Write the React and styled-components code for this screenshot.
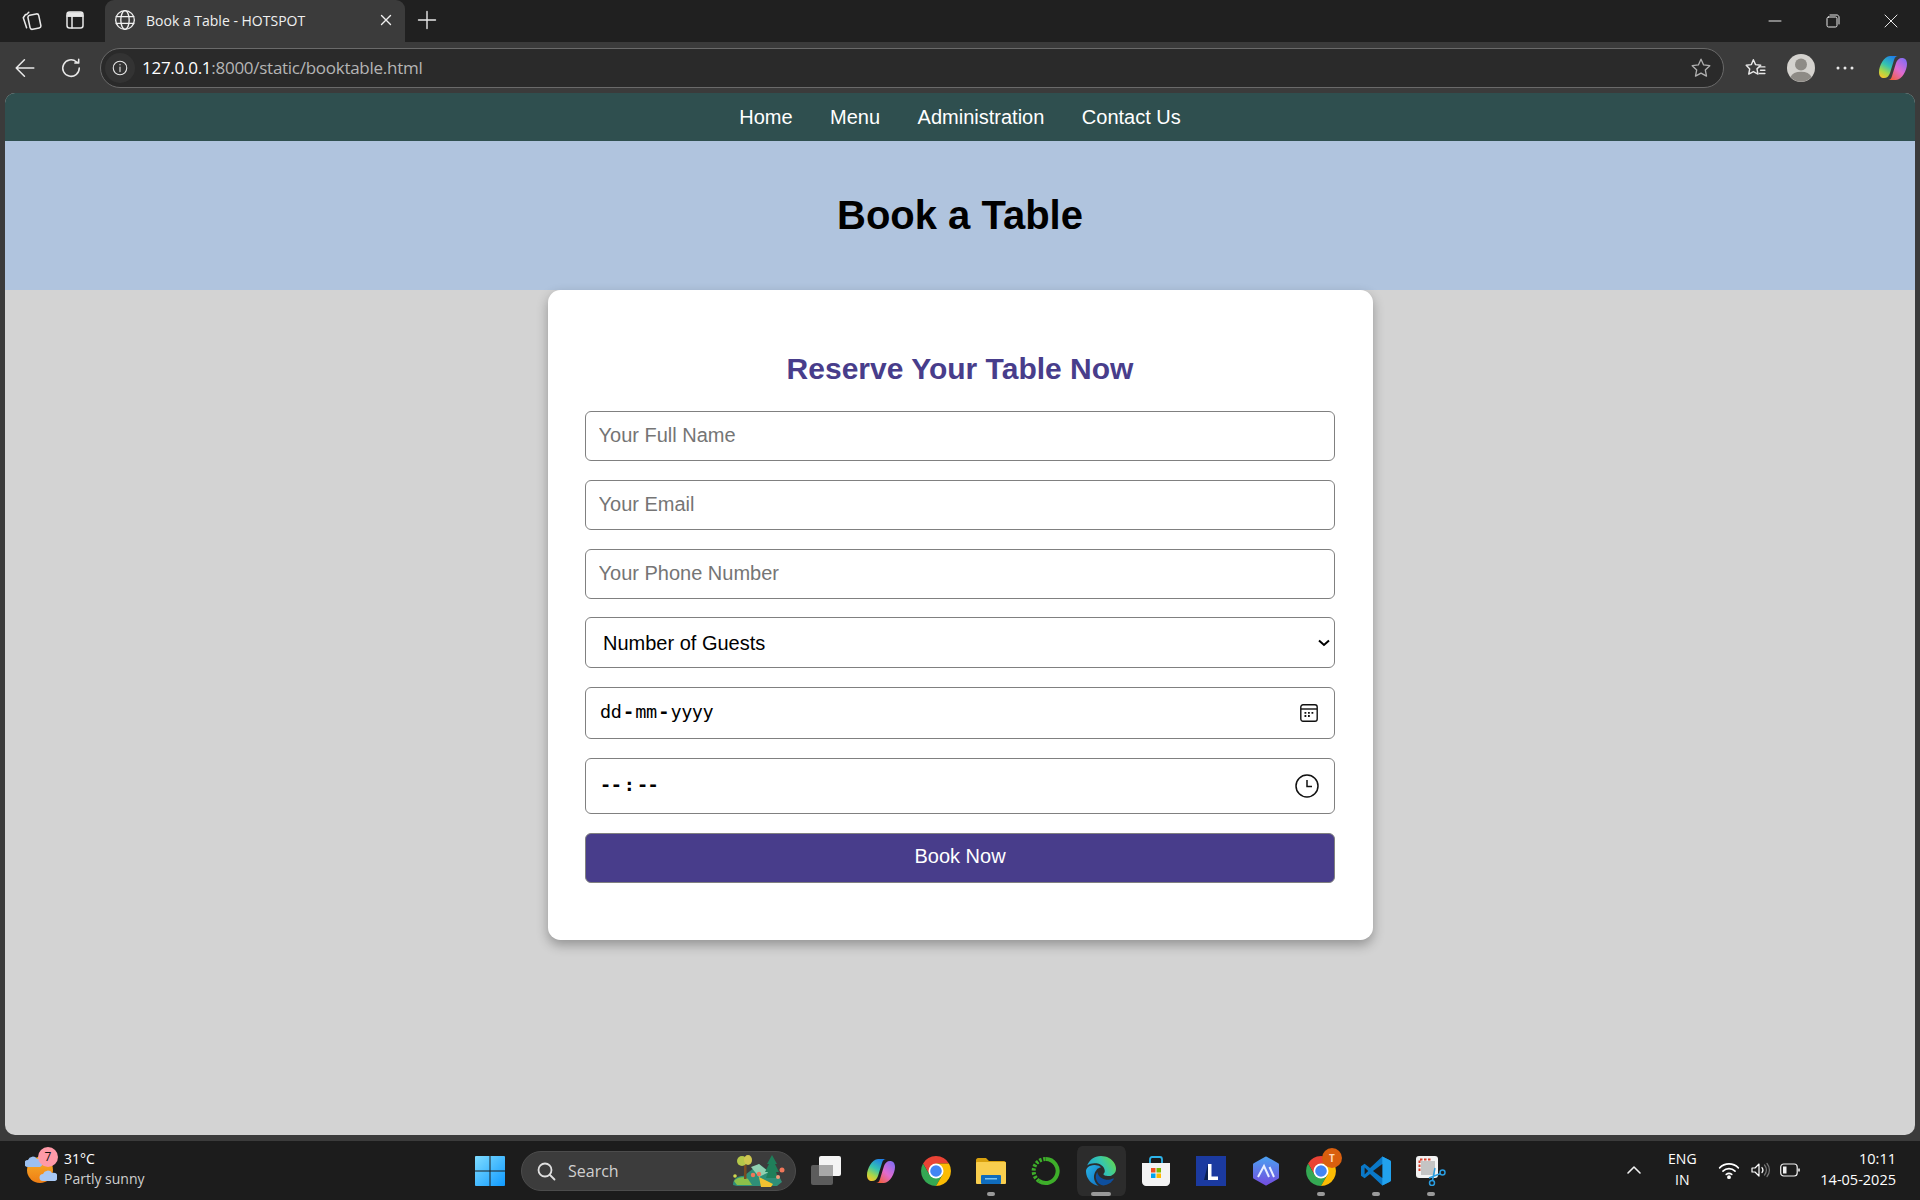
import React from "react";
import styled, { createGlobalStyle } from "styled-components";

const Global = createGlobalStyle`
html, body { margin: 0; padding: 0; background: #3b3b3b; }
* { box-sizing: border-box; }
`;

const chevron = encodeURIComponent(
  '<svg xmlns="http://www.w3.org/2000/svg" width="12" height="8" viewBox="0 0 12 8"><path d="M1 1.500l5 4.500 5-4.500" fill="none" stroke="#000" stroke-width="2"/></svg>'
);

const Screen = styled.div`
  width: 1920px;
  height: 1200px;
  display: flex;
  flex-direction: column;
  overflow: hidden;
  background: #3b3b3b;
  font-family: "Liberation Sans", Arial, sans-serif;
`;

/* browser chrome */
const TitleBar = styled.div`
  height: 42px;
  background: #202020;
  display: flex;
  align-items: flex-start;
  color: #e8e8e8;
`;
const SideIcons = styled.div`
  width: 105px;
  height: 40px;
  display: flex;
  align-items: center;
  gap: 23px;
  padding-left: 20px;
`;
const Tab = styled.div`
  width: 300px;
  height: 42px;
  background: #3b3b3b;
  border-radius: 9px 9px 0 0;
  display: flex;
  align-items: center;
  padding: 0 12px 2px 9px;
  font-family: "Open Sans", sans-serif;
  font-size: 14px;
  color: #f0f0f0;
`;
const TabTitle = styled.span`
  margin-left: 10px;
  flex: 1;
`;
const NewTab = styled.div`
  margin: 10px 0 0 12px;
  height: 20px;
  display: flex;
`;
const WindowButtons = styled.div`
  margin-left: auto;
  height: 42px;
  display: flex;
  align-items: center;
  gap: 44px;
  padding-right: 22px;
`;
const Toolbar = styled.div`
  height: 51px;
  display: flex;
  align-items: center;
  padding-left: 14px;
  color: #e8e8e8;
`;
const ToolGap = styled.div`
  width: 24px;
`;
const AddressBar = styled.div`
  margin-left: 18px;
  width: 1624px;
  height: 40px;
  background: #2a2a2a;
  border: 1.5px solid #6a6a6a;
  border-radius: 20px;
  display: flex;
  align-items: center;
  padding: 0 11px 0 4px;
  font-family: "Open Sans", sans-serif;
  font-size: 17px;
  letter-spacing: -0.27px;
`;
const InfoChip = styled.div`
  width: 30px;
  height: 30px;
  border-radius: 50%;
  background: #333333;
  display: flex;
  align-items: center;
  justify-content: center;
`;
const Host = styled.span`
  margin-left: 7px;
  color: #ffffff;
`;
const UrlRest = styled.span`
  color: #b5b5b5;
`;
const StarSlot = styled.div`
  margin-left: auto;
  display: flex;
`;
const ToolIcons = styled.div`
  display: flex;
  align-items: center;
  margin-left: 20px;
  gap: 21px;
  & > :last-child {
    margin-left: 4px;
  }
`;

/* the page itself */
const PageFrame = styled.div`
  flex: 0 0 1042px;
  margin: 0 5px;
  background: lightgray;
  border-radius: 10px;
  overflow: hidden;
  display: flex;
  flex-direction: column;
  align-items: center;
`;
const Nav = styled.nav`
  width: 100%;
  height: 48px;
  flex: none;
  background: darkslategray;
  display: flex;
  justify-content: center;
  align-items: center;
  gap: 37.5px;
`;
const NavLink = styled.a`
  color: #ffffff;
  font-size: 20px;
  text-decoration: none;
`;
const Hero = styled.header`
  width: 100%;
  height: 149px;
  flex: none;
  background: lightsteelblue;
  display: flex;
  align-items: center;
  justify-content: center;
`;
const Title = styled.h1`
  margin: 0;
  font-size: 40px;
  color: #000000;
`;
const Card = styled.section`
  width: 825px;
  height: 650px;
  flex: none;
  background: #ffffff;
  border-radius: 12.5px;
  box-shadow: 0 5px 12px rgba(0, 0, 0, 0.3);
  padding: 37.5px;
`;
const CardTitle = styled.h2`
  margin: 24.5px 0 24.75px;
  text-align: center;
  color: darkslateblue;
  font-size: 30px;
  line-height: 34.5px;
`;
const Form = styled.form`
  display: flex;
  flex-direction: column;
  gap: 18.7px;
`;
const TextInput = styled.input`
  width: 100%;
  height: 50px;
  border: 1.25px solid #808080;
  border-radius: 6px;
  padding: 0 12.5px 1px;
  font-family: inherit;
  font-size: 20px;
  outline: none;
  &::placeholder {
    color: #757575;
    opacity: 1;
  }
`;
const GuestSelect = styled.select`
  appearance: none;
  width: 100%;
  height: 51px;
  border: 1.25px solid #808080;
  border-radius: 6px;
  padding: 0 24px 0 17px;
  background: #ffffff url("data:image/svg+xml,${chevron}") no-repeat right 4px center;
  font-family: inherit;
  font-size: 20px;
  color: #000000;
  outline: none;
`;
const PickerField = styled.div`
  height: ${(p) => p.$h}px;
  border: 1.25px solid #808080;
  border-radius: 6px;
  display: flex;
  align-items: center;
  justify-content: space-between;
  padding: 0 16px 0 14px;
  color: #000000;
`;
const PickerText = styled.span`
  font-family: "DejaVu Sans Mono", monospace;
  font-size: 18.500px;
  letter-spacing: -0.5px;
  font-weight: ${(p) => (p.$bold ? 700 : 400)};
  margin-bottom: 3px;
`;
const Sep = styled.span`
  margin: 0 ${(p) => p.$m}px;
  font-weight: 700;
`;
const SubmitButton = styled.button`
  height: 50px;
  background: darkslateblue;
  color: #ffffff;
  border: 1.25px solid #808080;
  border-radius: 6px;
  padding: 0 0 2px;
  font-family: inherit;
  font-size: 20px;
`;

/* windows taskbar */
const Taskbar = styled.div`
  margin-top: 6px;
  height: 59px;
  flex: none;
  background: #1c1c1c;
  display: flex;
  align-items: center;
  font-family: "Open Sans", sans-serif;
  color: #ffffff;
`;
const Weather = styled.div`
  width: 475px;
  flex: none;
  display: flex;
  align-items: center;
  padding-left: 25px;
`;
const WeatherIcon = styled.div`
  position: relative;
  width: 32px;
  height: 34px;
  flex: none;
`;
const WeatherBadge = styled.span`
  position: absolute;
  left: 13px;
  top: -6.500px;
  width: 20px;
  height: 20px;
  border-radius: 50%;
  background: #ff9aa8;
  color: #111111;
  font-size: 12px;
  line-height: 20px;
  text-align: center;
`;
const WeatherText = styled.div`
  margin-left: 7px;
  padding-bottom: 3px;
  font-size: 14px;
  line-height: 20.500px;
`;
const WeatherSub = styled.div`
  color: #cfcfcf;
`;
const SearchPill = styled.div`
  margin-left: 16px;
  width: 275px;
  height: 40px;
  flex: none;
  border-radius: 20px;
  background: #3c3c3c;
  border: 1px solid #4c4c4c;
  display: flex;
  align-items: center;
  padding-left: 14px;
  font-size: 16px;
  color: #d0d0d0;
`;
const SearchLabel = styled.span`
  margin-left: 12px;
`;
const SearchArt = styled.div`
  margin-left: auto;
  margin-right: 9px;
  display: flex;
`;
const Apps = styled.div`
  padding-left: 15px;
  display: flex;
  align-items: center;
`;
const AppSlot = styled.div`
  position: relative;
  width: 55px;
  height: 50px;
  margin-left: ${(p) => (p.$first ? "-12.5px" : "0")};
  display: flex;
  align-items: center;
  justify-content: center;
  border-inline: 3px solid transparent;
  border-radius: 8px;
  background: ${(p) => (p.$active ? "#2c2c2c" : "transparent")};
  background-clip: padding-box;
`;
const RunDot = styled.span`
  position: absolute;
  bottom: 0;
  left: 50%;
  transform: translateX(-50%);
  width: ${(p) => (p.$active ? "20px" : "8px")};
  height: 4px;
  border-radius: 2px;
  background: #9a9a9a;
`;
const AppBadge = styled.span`
  position: absolute;
  right: 3.500px;
  top: 2.500px;
  width: 20px;
  height: 20px;
  border-radius: 50%;
  background: #d95f0e;
  color: #ffd9b8;
  font-size: 10px;
  font-weight: 700;
  line-height: 20px;
  text-align: center;
`;
const Tray = styled.div`
  margin-left: auto;
  display: flex;
  align-items: center;
  padding: 0 24px 2px 0;
`;
const Lang = styled.div`
  margin-left: 20px;
  width: 40px;
  font-size: 14px;
  line-height: 20.500px;
  text-align: center;
`;
const TrayIcons = styled.div`
  margin-left: 16px;
  display: flex;
  align-items: center;
  gap: 10px;
`;
const Clock = styled.div`
  margin-left: 20px;
  font-size: 14.500px;
  line-height: 20.500px;
  text-align: right;
`;

/* drawings */
const Line = ({ size = 20, children, sw = 1.4, color = "currentColor", view = 20 }) => (
  <svg width={size} height={size} viewBox={`0 0 ${view} ${view}`} fill="none" stroke={color} strokeWidth={sw} strokeLinecap="round" strokeLinejoin="round">
    {children}
  </svg>
);

const ChromeLogo = () => (
  <svg width="30" height="30" viewBox="2 2 44 44">
    <path d="M24 2A22 22 0 0 1 43 13H24L14.500 29.500 5 13A22 22 0 0 1 24 2z" fill="#ea4335" />
    <path d="M5 13l9.500 16.500h19L24 46A22 22 0 0 1 5 13z" fill="#34a853" />
    <path d="M43 13H24l9.500 16.500L24 46A22 22 0 0 0 43 13z" fill="#fbbc04" />
    <circle cx="24" cy="24" r="11" fill="#ffffff" />
    <circle cx="24" cy="24" r="8.500" fill="#4285f4" />
  </svg>
);

const CopilotLogo = ({ id = "cp", size = 28 }) => (
  <svg width={size} height={size} viewBox="0 0 28 28">
    <defs>
      <linearGradient id={`${id}A`} x1="0.7" y1="0" x2="0.2" y2="1">
        <stop offset="0" stopColor="#1f7fe8" />
        <stop offset="0.45" stopColor="#35c4b0" />
        <stop offset="0.75" stopColor="#a8d848" />
        <stop offset="1" stopColor="#f7c52d" />
      </linearGradient>
      <linearGradient id={`${id}B`} x1="0.9" y1="0.1" x2="0.2" y2="1">
        <stop offset="0" stopColor="#8a6cf0" />
        <stop offset="0.5" stopColor="#e06bd0" />
        <stop offset="1" stopColor="#f2603c" />
      </linearGradient>
    </defs>
    <path d="M11 2h8c-2 0-3 1-4 4l-4 13c-1 3-3 5-6 5-3 0-5-2-5-6C0 12 5 2 11 2z" fill={`url(#${id}A)`} />
    <path d="M17 26H9c2 0 3-1 4-4l4-13c1-3 3-5 6-5 3 0 5 2 5 6 0 6-5 16-11 16z" fill={`url(#${id}B)`} />
  </svg>
);

const EdgeLogo = () => (
  <svg width="30" height="30" viewBox="0 0 24 24">
    <defs>
      <linearGradient id="edTop" x1="0" y1="0.7" x2="1" y2="0.3">
        <stop offset="0" stopColor="#1f9fd8" />
        <stop offset="0.55" stopColor="#35c6b0" />
        <stop offset="1" stopColor="#62d84e" />
      </linearGradient>
      <linearGradient id="edLeft" x1="0" y1="0" x2="1" y2="1">
        <stop offset="0" stopColor="#28b4e4" />
        <stop offset="1" stopColor="#1070c4" />
      </linearGradient>
    </defs>
    <path d="M11.960.06q1.700 0 3.330.39 1.630.38 3.070 1.150 1.430.77 2.620 1.930 1.180 1.160 1.980 2.700.49.94.76 1.960.28 1 .28 2.080 0 .89-.23 1.700-.24.8-.69 1.480-.45.68-1.100 1.220-.64.53-1.450.88-.54.24-1.110.36-.58.13-1.160.13-.42 0-.97-.03-.54-.03-1.100-.12-.55-.1-1.050-.28-.5-.19-.84-.5-.12-.09-.23-.24-.1-.16-.1-.33 0-.15.16-.35.16-.2.35-.5.2-.28.36-.68.16-.4.16-.95 0-1.060-.4-1.960-.4-.91-1.060-1.640-.66-.74-1.520-1.280-.86-.55-1.790-.89-.84-.3-1.720-.44-.87-.14-1.760-.14-1.550 0-3.060.45T.94 7.550q.71-1.740 1.810-3.130Q3.860 3.030 5.200 2.080 6.550 1.130 8.180.6 9.800.06 11.960.06z" fill="url(#edTop)" />
    <path d="M6.360 16.590q0 1.100.27 2.150.27 1.060.78 2.030.51.96 1.240 1.770.74.82 1.660 1.400-1.470-.2-2.800-.74-1.330-.55-2.480-1.370-1.150-.83-2.080-1.900-.92-1.070-1.580-2.330T.36 14.940Q0 13.540 0 12.060q0-.81.32-1.490.31-.68.83-1.230.53-.55 1.200-.96.66-.4 1.350-.66.74-.27 1.500-.39.78-.12 1.550-.12.7 0 1.420.1.720.12 1.400.35.68.23 1.320.57.63.35 1.160.83-.35 0-.7.07-.33.07-.65.23v-.02q-.63.28-1.200.74-.57.46-1.050 1.040-.48.58-.87 1.260-.38.67-.65 1.390-.27.71-.42 1.440-.15.72-.15 1.380z" fill="url(#edLeft)" />
    <path d="M21.860 17.860q.14 0 .25.12.1.13.1.25t-.11.33l-.32.46-.43.53-.44.5q-.21.25-.38.42l-.22.23q-.58.53-1.340 1.040-.76.51-1.600.91-.86.4-1.740.64t-1.670.24q-.9 0-1.690-.28-.8-.28-1.480-.78-.68-.5-1.220-1.170-.53-.66-.92-1.440-.38-.77-.58-1.600-.2-.83-.2-1.670 0-1 .32-1.960.33-.97.87-1.800.14.95.55 1.770.41.82 1.020 1.500.6.68 1.380 1.210.78.54 1.640.9.86.36 1.770.56.92.2 1.800.2 1.120 0 2.180-.24 1.060-.23 2.060-.72l.2-.1.2-.05z" fill="#0d4f9e" />
  </svg>
);

const StoreLogo = () => (
  <svg width="30" height="30" viewBox="0 0 30 30">
    <path d="M9 7V3.500C9 2 10 1 11 1h8c1 0 2 1 2 2.500V7" fill="none" stroke="#2db4ea" strokeWidth="1.800" />
    <path d="M1 7h28v19c0 2-2 4-4 4H5c-2 0-4-2-4-4z" fill="#f3f3f3" />
    <rect x="10" y="12" width="4.500" height="4.500" fill="#f25022" />
    <rect x="15.500" y="12" width="4.500" height="4.500" fill="#7fba00" />
    <rect x="10" y="17.500" width="4.500" height="4.500" fill="#00a4ef" />
    <rect x="15.500" y="17.500" width="4.500" height="4.500" fill="#ffb900" />
  </svg>
);

const VsCodeLogo = () => (
  <svg width="30" height="30" viewBox="0 0 100 100">
    <path d="M71 2 96 14c2 1 4 3 4 6v60c0 3-2 5-4 6L71 98 30 60 12 74 0 66V34l12-8 18 14z" fill="#0a78c8" />
    <path d="M71 2 96 14c2 1 4 3 4 6v60c0 3-2 5-4 6L71 98z" fill="#22a2ee" />
    <path d="M71 27v46L40 50z" fill="#1c1c1c" />
    <path d="M12 38v24l12-12z" fill="#1c1c1c" />
  </svg>
);

const appList = [
  {
    key: "tasks",
    first: true,
    icon: (
      <svg width="30" height="30" viewBox="0 0 30 30">
        <rect x="0" y="9" width="22" height="20" rx="2" fill="#5c5c5c" />
        <rect x="8" y="0" width="22" height="20" rx="2" fill="#f4f4f4" />
        <rect x="8" y="9" width="14" height="11" fill="#a8a8a8" />
      </svg>
    ),
  },
  { key: "copilot", icon: <CopilotLogo id="cpTask" /> },
  { key: "chrome", icon: <ChromeLogo /> },
  {
    key: "files",
    run: true,
    icon: (
      <svg width="30" height="28" viewBox="0 0 30 28">
        <path d="M0 3c0-1 1-2 2-2h8l3 3h15c1 0 2 1 2 2v4H0z" fill="#d9a10e" />
        <rect x="0" y="5" width="30" height="22" rx="1" fill="#f9ce4e" />
        <rect x="5" y="18" width="20" height="9" rx="1" fill="#0f6cbd" />
        <rect x="9" y="21" width="12" height="1.500" fill="#7cc4f2" />
      </svg>
    ),
  },
  {
    key: "ring",
    icon: (
      <svg width="30" height="30" viewBox="0 0 30 30" fill="none">
        <path d="M15 3a12 12 0 1 1-7 22" stroke="#3eae2a" strokeWidth="4" />
        <path d="M8 25A12 12 0 0 1 15 3" stroke="#3eae2a" strokeWidth="4" strokeDasharray="2.500 1.500" />
      </svg>
    ),
  },
  { key: "edge", active: true, icon: <EdgeLogo /> },
  { key: "store", icon: <StoreLogo /> },
  {
    key: "launcher",
    icon: (
      <svg width="30" height="30" viewBox="0 0 30 30">
        <rect width="30" height="30" fill="#1b3aa0" />
        <path d="M8 24 12 8v16z" fill="#0a2050" />
        <path d="M12 8h3.500v12.500H22V24H12z" fill="#ffffff" />
      </svg>
    ),
  },
  {
    key: "hex",
    icon: (
      <svg width="28" height="30" viewBox="0 0 28 30">
        <defs>
          <linearGradient id="hxA" x1="0" y1="0" x2="0" y2="1">
            <stop offset="0" stopColor="#4d9df0" />
            <stop offset="1" stopColor="#7150e0" />
          </linearGradient>
        </defs>
        <path d="M14 2 25.500 8.500v13L14 28 2.500 21.500v-13z" fill="url(#hxA)" stroke="url(#hxA)" strokeWidth="3" strokeLinejoin="round" />
        <path d="M6 21 12 10l5 11M17.500 11l4.500 10" fill="none" stroke="#e8eeff" strokeWidth="2" />
      </svg>
    ),
  },
  { key: "chrome2", run: true, icon: <ChromeLogo />, badge: "T" },
  { key: "vscode", run: true, icon: <VsCodeLogo /> },
  {
    key: "snip",
    run: true,
    icon: (
      <svg width="30" height="30" viewBox="0 0 30 30">
        <rect x="0" y="0" width="22" height="22" rx="3" fill="#f2f2f2" />
        <path d="M5 5h14v14H5z" fill="#c4c4c4" />
        <path d="M3.500 15V3.500H15" fill="none" stroke="#d9402c" strokeWidth="2" strokeDasharray="2.500 1.500" />
        <path d="M26 17 13 22M16 27l3-15" stroke="#2a9de0" strokeWidth="1.500" fill="none" />
        <circle cx="26.500" cy="16.500" r="2.500" fill="#1c1c1c" stroke="#2a9de0" strokeWidth="1.500" />
        <circle cx="16" cy="27" r="2.500" fill="#1c1c1c" stroke="#2a9de0" strokeWidth="1.500" />
      </svg>
    ),
  },
];

export default function App() {
  return (
    <Screen>
      <Global />
      <TitleBar>
        <SideIcons>
          <Line size={22}>
            <rect x="8" y="5" width="10" height="13" rx="2" transform="rotate(-12 13 11)" />
            <path d="M5 5 3 8l3 9M8 3 6 5" />
          </Line>
          <Line size={20} sw={1.5}>
            <rect x="2" y="2" width="16" height="16" rx="2.500" />
            <path d="M2 6h16M7 6v12" />
            <path d="M3 3h14v3H3z" fill="currentColor" />
          </Line>
        </SideIcons>
        <Tab>
          <Line size={22} sw={1.2}>
            <circle cx="10" cy="10" r="8.500" />
            <ellipse cx="10" cy="10" rx="3.800" ry="8.500" />
            <path d="M2 7h16M2 13h16" />
          </Line>
          <TabTitle>Book a Table - HOTSPOT</TabTitle>
          <Line size={14} sw={1.4} view={14}>
            <path d="M2.500 2.500l9 9M11.500 2.500l-9 9" />
          </Line>
        </Tab>
        <NewTab>
          <Line size={20} sw={1.4}>
            <path d="M10 1.500v17M1.500 10h17" />
          </Line>
        </NewTab>
        <WindowButtons>
          <Line size={14} sw={1} view={14}>
            <path d="M1 7h12" />
          </Line>
          <Line size={14} sw={1} view={14}>
            <rect x="1" y="3" width="10" height="10" rx="1.500" />
            <path d="M4 1h7c1 0 2 1 2 2v7" />
          </Line>
          <Line size={14} sw={1} view={14}>
            <path d="M1 1l12 12M13 1 1 13" />
          </Line>
        </WindowButtons>
      </TitleBar>
      <Toolbar>
        <Line size={22} sw={1.4}>
          <path d="M18 10H2M9.500 2.500 2 10l7.500 7.500" />
        </Line>
        <ToolGap />
        <Line size={22} sw={1.4}>
          <path d="M17 5.500V2M17 5.500h-3.500M17.500 10A7.500 7.500 0 1 1 15 4.500L17 5.500" />
        </Line>
        <AddressBar>
          <InfoChip>
            <Line size={18} sw={1.2}>
              <circle cx="10" cy="10" r="7.500" />
              <path d="M10 9v5M10 6v.5" />
            </Line>
          </InfoChip>
          <Host>127.0.0.1</Host>
          <UrlRest>:8000/static/booktable.html</UrlRest>
          <StarSlot>
            <Line size={22} sw={1.2} color="#b0b0b0">
              <path d="M10 2l2.400 5.200 5.600.7-4.100 3.900 1.100 5.600L10 14.600l-5 2.800 1.100-5.600L2 7.900l5.600-.7z" />
            </Line>
          </StarSlot>
        </AddressBar>
        <ToolIcons>
          <Line size={22} sw={1.3}>
            <path d="M8.500 2.500l2 4.400 4.700.6-3.400 3.300.9 4.700-4.200-2.300-4.200 2.300.9-4.700L2 7.500l4.700-.6z" />
            <path d="M14 9h5M15 12h4M14 15h5" />
          </Line>
          <svg width="28" height="28" viewBox="0 0 28 28">
            <circle cx="14" cy="14" r="14" fill="#d4d2ce" />
            <circle cx="14" cy="10.500" r="6" fill="#8e8b86" />
            <path d="M3.500 23a11 7.500 0 0 1 21 0 14 14 0 0 1-21 0z" fill="#8e8b86" />
          </svg>
          <svg width="18" height="6" viewBox="0 0 18 6" fill="#e8e8e8">
            <circle cx="2" cy="3" r="1.500" />
            <circle cx="9" cy="3" r="1.500" />
            <circle cx="16" cy="3" r="1.500" />
          </svg>
          <CopilotLogo id="cpBar" />
        </ToolIcons>
      </Toolbar>

      <PageFrame>
        <Nav>
          <NavLink>Home</NavLink>
          <NavLink>Menu</NavLink>
          <NavLink>Administration</NavLink>
          <NavLink>Contact Us</NavLink>
        </Nav>
        <Hero>
          <Title>Book a Table</Title>
        </Hero>
        <Card>
          <CardTitle>Reserve Your Table Now</CardTitle>
          <Form>
            <TextInput placeholder="Your Full Name" />
            <TextInput placeholder="Your Email" />
            <TextInput placeholder="Your Phone Number" />
            <GuestSelect defaultValue="">
              <option value="">Number of Guests</option>
            </GuestSelect>
            <PickerField $h={52}>
              <PickerText>
                dd<Sep $m={1.7}>-</Sep>mm<Sep $m={1.7}>-</Sep>yyyy
              </PickerText>
              <svg width="18" height="18" viewBox="0 0 18 18" fill="none" stroke="#111" strokeWidth="1.400">
                <rect x="0.800" y="0.800" width="16.400" height="16.400" rx="2.200" />
                <path d="M1 5h16" />
                <path d="M4.500 8.800h1.800M8 8.800h1.800M11.500 8.800h1.800M4.500 12h1.800M8 12h1.800" strokeWidth="1.800" />
              </svg>
            </PickerField>
            <PickerField $h={56.5}>
              <PickerText $bold>
                --<Sep $m={2.5}>:</Sep>--
              </PickerText>
              <svg width="24" height="24" viewBox="0 0 24 24" fill="none" stroke="#111" strokeWidth="1.500" style={{ marginRight: -1 }}>
                <circle cx="12" cy="12" r="11" />
                <path d="M12 6v6.500h5" />
              </svg>
            </PickerField>
            <SubmitButton type="button">Book Now</SubmitButton>
          </Form>
        </Card>
      </PageFrame>

      <Taskbar>
        <Weather>
          <WeatherIcon>
            <svg width="32" height="34" viewBox="0 0 32 34">
              <defs>
                <linearGradient id="sun" x1="0" y1="0" x2="0" y2="1">
                  <stop offset="0" stopColor="#f8b22a" />
                  <stop offset="1" stopColor="#ee7d14" />
                </linearGradient>
              </defs>
              <circle cx="15" cy="16" r="13" fill="url(#sun)" />
              <path d="M3 13a3.500 3.500 0 0 1 0-7 5 5 0 0 1 9-1 4 4 0 0 1 3 8z" fill="#9cc0f0" />
              <path d="M18 27a3.500 3.500 0 0 1 0-7 5 5 0 0 1 9-1 4 4 0 0 1 3 8z" fill="#a8c8f4" />
            </svg>
            <WeatherBadge>7</WeatherBadge>
          </WeatherIcon>
          <WeatherText>
            <div>31°C</div>
            <WeatherSub>Partly sunny</WeatherSub>
          </WeatherText>
        </Weather>
        <svg width="30" height="30" viewBox="0 0 30 30">
          <defs>
            <linearGradient id="winA" x1="0" y1="0" x2="1" y2="1">
              <stop offset="0" stopColor="#7fdcff" />
              <stop offset="1" stopColor="#0f9aff" />
            </linearGradient>
          </defs>
          <path d="M1 0h13.500v14.500H0V1c0-.5.500-1 1-1zM15.500 0H29c.5 0 1 .5 1 1v13.500H15.500zM0 15.500h14.500V30H1c-.5 0-1-.5-1-1zM15.500 15.500H30V29c0 .5-.5 1-1 1H15.500z" fill="url(#winA)" />
        </svg>
        <SearchPill>
          <Line size={20} sw={1.8} color="#e0e0e0">
            <circle cx="9" cy="9" r="6.500" />
            <path d="M14 14l4.500 4.500" />
          </Line>
          <SearchLabel>Search</SearchLabel>
          <SearchArt>
            <svg width="55" height="32" viewBox="0 0 55 32">
              <path d="M2 30c0-7 5-9 10-9l2-1 14-11 12 9 8 3 3 6-5 4H6z" fill="#2f8f78" />
              <path d="M20 12l8-3 10 8-10 5z" fill="#8fd0b0" />
              <path d="M3 26c3-4 10-5 14-2l4 6H6z" fill="#8cc04a" />
              <path d="M28 22l14 7-2 3H30z" fill="#f2c230" />
              <rect x="13" y="10" width="2.500" height="14" fill="#7a4a20" />
              <ellipse cx="11" cy="6" rx="5" ry="5" fill="#b5c84a" />
              <ellipse cx="17" cy="5" rx="4" ry="5" fill="#d0c850" />
              <path d="M41 0l5 9h-2l4 8h-3l2 6H35l2-6h-3l4-8h-2z" fill="#1f7f5a" />
              <circle cx="22" cy="20" r="2.200" fill="#f0775a" />
              <circle cx="28" cy="19" r="2.200" fill="#f0775a" />
              <circle cx="51" cy="15" r="2.500" fill="#f0775a" />
              <circle cx="47" cy="22" r="2" fill="#f09a7a" />
              <circle cx="4" cy="21" r="1.800" fill="#d0d850" />
            </svg>
          </SearchArt>
        </SearchPill>
        <Apps>
          {appList.map((app) => (
            <AppSlot key={app.key} $first={app.first} $active={app.active}>
              {app.icon}
              {app.badge && <AppBadge>{app.badge}</AppBadge>}
              {(app.run || app.active) && <RunDot $active={app.active} />}
            </AppSlot>
          ))}
        </Apps>
        <Tray>
          <Line size={16} sw={1.6} view={16} color="#f0f0f0">
            <path d="M2 11l6-6 6 6" />
          </Line>
          <Lang>
            ENG
            <br />
            IN
          </Lang>
          <TrayIcons>
            <Line size={22} sw={1.5}>
              <path d="M1.500 8a12 12 0 0 1 17 0M4.500 11a8 8 0 0 1 11 0M7.500 14a4 4 0 0 1 5 0" />
              <circle cx="10" cy="16.500" r="1" fill="currentColor" />
            </Line>
            <Line size={20} sw={1.2}>
              <path d="M2 8v4h3l4 4V4L5 8z" />
              <path d="M12 7.500a4 4 0 0 1 0 5" />
              <path d="M14.500 5a7.500 7.500 0 0 1 0 10M17 3.500a10 10 0 0 1 0 13" stroke="#777" />
            </Line>
            <svg width="20" height="14" viewBox="0 0 20 14" fill="none" stroke="#f0f0f0" strokeWidth="1.200">
              <rect x="0.700" y="1" width="16.500" height="12" rx="3" />
              <rect x="3" y="3.500" width="3.500" height="7" fill="#f0f0f0" stroke="none" />
              <path d="M19 5.500v3" strokeWidth="1.600" />
            </svg>
          </TrayIcons>
          <Clock>
            10:11
            <br />
            14-05-2025
          </Clock>
        </Tray>
      </Taskbar>
    </Screen>
  );
}
